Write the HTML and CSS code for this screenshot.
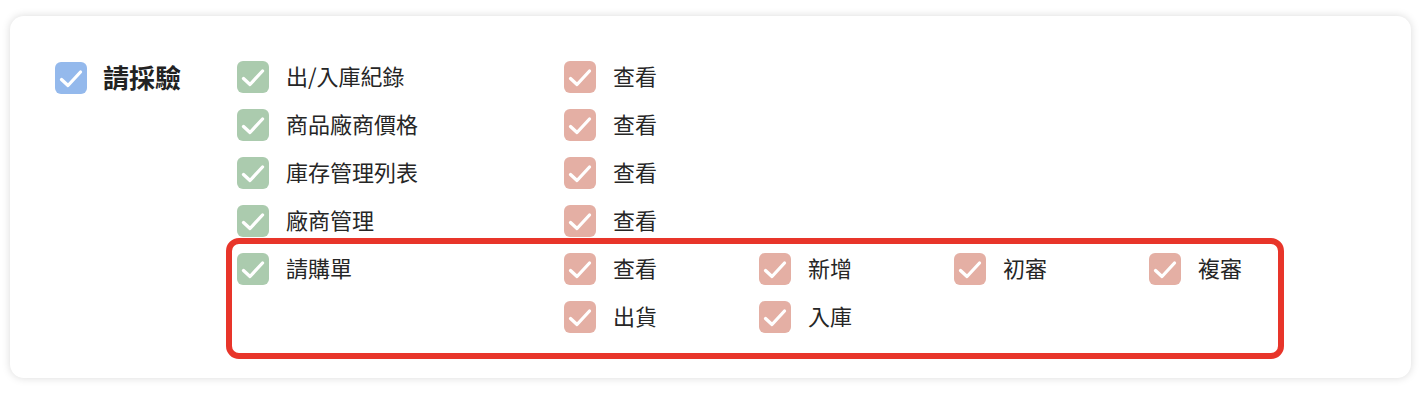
FILE: index.html
```html
<!DOCTYPE html>
<html lang="zh-Hant">
<head>
<meta charset="utf-8">
<title>請採驗</title>
<link rel="stylesheet" href="styles.css">
</head>
<body>
<svg class="defs" width="0" height="0" aria-hidden="true">
  <symbol id="chk" viewBox="0 0 32 32">
    <path d="M6.5 17.5 L13 23.5 L25.5 10" fill="none" stroke="#fff" stroke-width="3.3" stroke-linecap="round" stroke-linejoin="round"/>
  </symbol>
</svg>
<div class="card">
  <div class="group">
    <div class="group-head">
      <span class="box blue"><svg><use href="#chk"/></svg></span>
      <span class="group-title">請採驗</span>
    </div>
    <div class="perms">
      <div class="row">
        <div class="item main"><span class="box green"><svg><use href="#chk"/></svg></span><span class="label">出/入庫紀錄</span></div>
        <div class="opts">
          <div class="item"><span class="box red"><svg><use href="#chk"/></svg></span><span class="label">查看</span></div>
        </div>
      </div>
      <div class="row">
        <div class="item main"><span class="box green"><svg><use href="#chk"/></svg></span><span class="label">商品廠商價格</span></div>
        <div class="opts">
          <div class="item"><span class="box red"><svg><use href="#chk"/></svg></span><span class="label">查看</span></div>
        </div>
      </div>
      <div class="row">
        <div class="item main"><span class="box green"><svg><use href="#chk"/></svg></span><span class="label">庫存管理列表</span></div>
        <div class="opts">
          <div class="item"><span class="box red"><svg><use href="#chk"/></svg></span><span class="label">查看</span></div>
        </div>
      </div>
      <div class="row">
        <div class="item main"><span class="box green"><svg><use href="#chk"/></svg></span><span class="label">廠商管理</span></div>
        <div class="opts">
          <div class="item"><span class="box red"><svg><use href="#chk"/></svg></span><span class="label">查看</span></div>
        </div>
      </div>
      <div class="row highlight">
        <div class="item main"><span class="box green"><svg><use href="#chk"/></svg></span><span class="label">請購單</span></div>
        <div class="opts">
          <div class="item"><span class="box red"><svg><use href="#chk"/></svg></span><span class="label">查看</span></div>
          <div class="item"><span class="box red"><svg><use href="#chk"/></svg></span><span class="label">新增</span></div>
          <div class="item"><span class="box red"><svg><use href="#chk"/></svg></span><span class="label">初審</span></div>
          <div class="item"><span class="box red"><svg><use href="#chk"/></svg></span><span class="label">複審</span></div>
          <div class="item"><span class="box red"><svg><use href="#chk"/></svg></span><span class="label">出貨</span></div>
          <div class="item"><span class="box red"><svg><use href="#chk"/></svg></span><span class="label">入庫</span></div>
        </div>
      </div>
    </div>
  </div>
</div>
</body>
</html>
```

FILE: styles.css
```css
html, body {
  margin: 0;
  padding: 0;
  background: #ffffff;
}
body {
  font-family: "Noto Sans CJK TC", "Noto Sans", sans-serif;
  color: #262626;
  padding: 16px 15px 25px 10px;
}
.defs {
  position: absolute;
  width: 0;
  height: 0;
}
.card {
  background: #fff;
  border-radius: 14px;
  box-shadow: 0 0 8px rgba(0, 0, 0, 0.15);
  padding: 45px 20px 45px 45px;
  height: 362px;
  box-sizing: border-box;
}
.group {
  display: flex;
  align-items: flex-start;
}
.group-head {
  display: flex;
  align-items: center;
  gap: 16px;
  width: 182px;
  margin-top: 1px;
}
.group-title {
  font-size: 26px;
  font-weight: 700;
  line-height: 32px;
  color: #222;
  position: relative;
  top: -1px;
}
.perms {
  display: flex;
  flex-direction: column;
  gap: 16px;
}
.row {
  display: flex;
  align-items: flex-start;
}
.row.highlight {
  position: relative;
}
.row.highlight::after {
  content: "";
  position: absolute;
  top: -15px;
  left: -11px;
  width: 1058px;
  height: 121px;
  box-sizing: border-box;
  border: 6px solid #e8352a;
  border-radius: 13px;
  pointer-events: none;
}
.item {
  display: flex;
  align-items: center;
  gap: 17px;
  height: 32px;
}
.item.main {
  width: 327px;
}
.opts {
  display: grid;
  grid-template-columns: repeat(4, 195px);
  row-gap: 16px;
}
.box {
  width: 32px;
  height: 32px;
  border-radius: 6px;
  flex: none;
  display: block;
}
.box svg {
  width: 32px;
  height: 32px;
  display: block;
}
.blue { background: #94b9ec; }
.green { background: #abcbae; }
.red { background: #e4afa4; }
.label {
  font-size: 22px;
  line-height: 32px;
  position: relative;
  top: -2px;
  color: #262626;
}
```
